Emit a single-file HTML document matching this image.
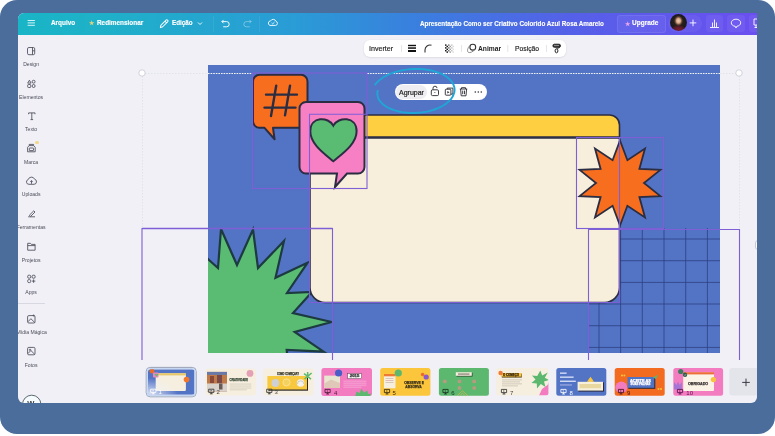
<!DOCTYPE html>
<html><head><meta charset="utf-8">
<style>
body *{ }
html,body{margin:0;padding:0;width:775px;height:436px;overflow:hidden;background:#fff;font-family:"Liberation Sans",sans-serif;}
.abs{position:absolute;}
#frame{position:absolute;left:0;top:0;width:775px;height:434px;background:#4b6d9c;border-radius:17px;}
#screen{will-change:transform;position:absolute;left:18px;top:13px;width:739px;height:390px;background:#f0f0f6;border-radius:6px 0 6px 6px;overflow:hidden;}
#header{position:absolute;left:0;top:0;width:739px;height:22.4px;background:linear-gradient(90deg,#19b5c6 0%,#1fb0c9 12%,#2a9bd6 38%,#3b7ddf 55%,#5560e8 75%,#6a4ff0 100%);}
.ht{position:absolute;color:#fff;font-weight:bold;font-size:7px;line-height:8px;white-space:nowrap;-webkit-text-stroke:0.12px #fff;}
.sb{position:absolute;left:0;width:29px;text-align:center;font-size:5.1px;line-height:6px;color:#4a4c58;white-space:nowrap;}
.tb{position:absolute;font-size:7.5px;line-height:9px;color:#222;white-space:nowrap;}
.thumb{position:absolute;top:369px;width:51px;height:27px;border-radius:3px;overflow:hidden;}
.tn{position:absolute;left:4px;bottom:1px;font-size:6px;line-height:7px;color:#333;}
</style></head>
<body>
<div id="frame"></div>
<div id="screen">
  <div id="header">
    <!-- hamburger -->
    <svg class="abs" style="left:9px;top:6px" width="9" height="9" viewBox="0 0 9 9"><path d="M0.6 1.5H7.9M0.6 3.9H7.9M0.6 6.3H7.9" stroke="#e6fbff" stroke-width="0.9" fill="none"/></svg>
    <div class="ht" style="left:33px;top:5.8px;font-size:6.4px;">Arquivo</div>
    <div class="ht" style="left:71px;top:6.2px;font-size:6px;color:#e6d37a;-webkit-text-stroke:0;">★</div>
    <div class="ht" style="left:79px;top:5.8px;font-size:6.4px;">Redimensionar</div>
    <svg class="abs" style="left:141px;top:4.5px" width="10" height="11" viewBox="0 0 10 11"><path d="M1.4 9.6L1.8 7.4L7 2.2A1.1 1.1 0 0 1 8.6 3.8L3.4 9Z M6 3.2L7.6 4.8" stroke="#f0faff" stroke-width="1.05" fill="none" stroke-linejoin="round"/></svg>
    <div class="ht" style="left:154px;top:5.8px;font-size:6.3px;">Edição</div>
    <svg class="abs" style="left:179px;top:8px" width="6" height="5" viewBox="0 0 6 5"><path d="M1 1.5L3 3.5L5 1.5" stroke="#fff" stroke-width="0.9" fill="none"/></svg>
    <div class="abs" style="left:195px;top:3px;width:1px;height:16px;background:rgba(255,255,255,0.07)"></div>
    <svg class="abs" style="left:203px;top:6px" width="10" height="9" viewBox="0 0 10 9"><path d="M2.3 1.2L0.9 2.6L2.3 4M1.2 2.6H5.6A2.6 2.6 0 0 1 5.6 7.8H2.6" stroke="#f0faff" stroke-width="1" fill="none" stroke-linecap="round" stroke-linejoin="round"/></svg>
    <svg class="abs" style="left:224px;top:6px" width="10" height="9" viewBox="0 0 10 9"><path d="M7.7 1.2L9.1 2.6L7.7 4M8.8 2.6H4.4A2.6 2.6 0 0 0 4.4 7.8H7.4" stroke="rgba(255,255,255,0.35)" stroke-width="1" fill="none" stroke-linecap="round" stroke-linejoin="round"/></svg>
    <div class="abs" style="left:241px;top:3px;width:1px;height:16px;background:rgba(255,255,255,0.07)"></div>
    <svg class="abs" style="left:249px;top:5px" width="12" height="10" viewBox="0 0 12 10"><path d="M3 7.4H8.6A2.1 2.1 0 0 0 8.9 3.3A2.9 2.9 0 0 0 3.6 2.9A2.3 2.3 0 0 0 3 7.4Z" stroke="#eaf8ff" stroke-width="1" fill="none"/><path d="M4.6 4.9L5.7 5.9L7.5 4.1" stroke="#eaf8ff" stroke-width="0.9" fill="none"/></svg>
    <div class="ht" style="left:402px;top:7px;font-size:6.3px;">Apresentação Como ser Criativo Colorido Azul Rosa Amarelo</div>
    <div class="abs" style="left:599px;top:2px;width:47px;height:16px;border-radius:3px;background:rgba(255,255,255,0.05);border:0.5px solid rgba(255,255,255,0.09)"></div>
    <div class="ht" style="left:606.5px;top:6.6px;font-size:6px;color:#e9a6ee;-webkit-text-stroke:0;">★</div>
    <div class="ht" style="left:614px;top:6px;font-size:6.5px;">Upgrade</div>
    <div class="abs" style="left:650px;top:2px;width:34px;height:17px;border-radius:9px;background:rgba(255,255,255,0.05)"></div>
    <div class="abs" style="left:651.5px;top:1.2px;width:17px;height:17px;border-radius:50%;background:radial-gradient(ellipse 26% 30% at 50% 40%,#f0d0b8 0%,#d8a888 45%,rgba(150,100,80,0.6) 75%,transparent 100%),radial-gradient(ellipse 45% 28% at 50% 92%,#7a2030 0%,#5a1a28 60%,transparent 100%),radial-gradient(circle at 50% 45%,#3a2a22 0%,#1e1c1a 55%,#15281e 100%);"></div>
    <svg class="abs" style="left:670.5px;top:5.6px" width="8" height="8" viewBox="0 0 8 8"><path d="M4 0.6V7.2M0.7 3.9H7.3" stroke="#fff" stroke-width="0.9"/></svg>
    <div class="abs" style="left:688px;top:2px;width:17px;height:17px;border-radius:3px;background:rgba(255,255,255,0.06)"></div>
    <svg class="abs" style="left:691px;top:5px" width="11" height="10" viewBox="0 0 11 10"><path d="M1 9.5H10M3.5 9V4.5M5.5 9V1.5M7.5 9V4.5" stroke="#fff" stroke-width="0.9" fill="none"/></svg>
    <div class="abs" style="left:709px;top:2px;width:18px;height:17px;border-radius:3px;background:rgba(255,255,255,0.06)"></div>
    <svg class="abs" style="left:712px;top:5px" width="12" height="11" viewBox="0 0 12 11"><path d="M6 1.2C3.2 1.2 1.3 2.8 1.3 4.8C1.3 6.6 2.9 8 5.2 8.3L6 10L6.8 8.3C9.1 8 10.7 6.6 10.7 4.8C10.7 2.8 8.8 1.2 6 1.2Z" stroke="#fff" stroke-width="0.9" fill="none"/></svg>
    <div class="abs" style="left:731px;top:2px;width:18px;height:17px;border-radius:3px;background:rgba(255,255,255,0.06)"></div>
    <svg class="abs" style="left:734px;top:5px" width="8" height="11" viewBox="0 0 8 11"><path d="M7 1H2V7H7M4 7V9.5M2.5 9.5H5.5" stroke="#fff" stroke-width="0.9" fill="none"/></svg>
  </div>
<div id="pg" style="position:absolute;left:-18px;top:-13px;width:775px;height:436px;">
<!-- canvas SVG -->
<svg class="abs" style="left:0;top:0" width="775" height="436" viewBox="0 0 775 436">
  <defs>
    <clipPath id="slideclip"><rect x="208" y="65" width="512" height="288"/></clipPath>
  </defs>
  <rect x="208" y="65" width="512" height="288" fill="#5373c5"/>
  <g clip-path="url(#slideclip)">
    <!-- grid -->
    <g stroke="#2c3d7e" stroke-width="0.75">
      <path d="M599 228V353M620.6 228V353M642.3 228V353M664 228V353M685.7 228V353M707.4 228V353"/>
      <path d="M588 239H720M588 260.7H720M588 282.4H720M588 304H720M588 325.7H720M588 347.4H720"/>
    </g>
    <!-- green starburst -->
    <path d="M198 250L209 260L218 268L221 229L237 265L253 229.6L258 268L284 241L275.5 277.8L307.6 262.7L287 293L312 292L293 313L331.7 322L294.7 332L323.6 351.7L286.7 350L290 380L180 380Z" fill="#5abb73" stroke="#1c3a40" stroke-width="2.2" stroke-linejoin="miter"/>
    <!-- card -->
    <path d="M310 138H619.5V287.5A15 15 0 0 1 604.5 302.5H325A15 15 0 0 1 310 287.5Z" fill="#f7eedc" stroke="#2b2d42" stroke-width="1.6"/>
    <path d="M310 137V125A10 10 0 0 1 320 115H609.5A10 10 0 0 1 619.5 125V137Z" fill="#ffcf42" stroke="#2b2d42" stroke-width="1.6"/>
    <!-- orange star -->
    <path id="ostar_dummy" d="" />
    <path id="ostar" d="M620.0 140.5L627.4 160.2L645.0 148.6L639.4 168.9L660.4 169.9L644.0 183.0L660.4 196.1L639.4 197.1L645.0 217.4L627.4 205.8L620.0 225.5L612.6 205.8L595.0 217.4L600.6 197.1L579.6 196.1L596.0 183.0L579.6 169.9L600.6 168.9L595.0 148.6L612.6 160.2Z" fill="#f86e1f" stroke="#2b2d42" stroke-width="1.8" stroke-linejoin="miter"/>
    <!-- orange bubble -->
    <path d="M259.5 74.8H301A6.5 6.5 0 0 1 307.5 81.3V121.3A6.5 6.5 0 0 1 301 127.8H273L274.6 139.3L264.5 127.8H259.5A6.5 6.5 0 0 1 253 121.3V81.3A6.5 6.5 0 0 1 259.5 74.8Z" fill="#f86e1f" stroke="#2b2d42" stroke-width="2" stroke-linejoin="round"/>
    <path d="M266 94.6H297M264.5 107.6H295.5M276.2 85.7L271 116M290 85.7L285 115.4" stroke="#2b2d42" stroke-width="2.4" fill="none" stroke-linecap="round"/>
    <!-- pink bubble -->
    <path d="M306 102H358A6.5 6.5 0 0 1 364.5 108.5V167A6.5 6.5 0 0 1 358 173.5H347L335 187L337 173.5H306A6.5 6.5 0 0 1 299.5 167V108.5A6.5 6.5 0 0 1 306 102Z" fill="#f77fc4" stroke="#2b2d42" stroke-width="2"/>
    <path d="M333.3 125.6C328.5 116.5 310.3 116 310.3 131.3C310.3 144 324 153.5 333.3 161.3C342.5 153.5 356.6 144 356.6 131.3C356.6 116 338.2 116.5 333.3 125.6Z" fill="#5abb73" stroke="#2b2d42" stroke-width="2"/>
  </g>
  <!-- selection boxes -->
  <g fill="none" stroke="#7f5fd6" stroke-width="1.1">
    <rect x="252.5" y="73" width="114.5" height="115.5"/>
    <path d="M309.5 188V302.5H619.5V137.5"/><path d="M309.5 188.5V114.3H367"/>
    <rect x="576.5" y="137.5" width="87" height="91"/>
    <path d="M588.5 360V229.5H739.5V360"/>
    <path d="M142 360V228.5H332.5V360"/><path d="M142 228.5H332.5" stroke-width="1.6"/>
  </g>
  <!-- dashed selection line -->
  <path d="M142 73.5H208M720 73.5H739M142.5 73V228M739.5 73V228" stroke="#e2e2ea" stroke-width="1" stroke-dasharray="1.5 1.5" fill="none"/>
  <path d="M208 73.5H252M367.5 73.5H720" stroke="#f4f6ff" stroke-width="1.1" stroke-dasharray="1.6 1" fill="none"/>
  <circle cx="142" cy="73" r="3.2" fill="#fff" stroke="#c8c8d4" stroke-width="0.8"/>
  <circle cx="739" cy="73" r="3.2" fill="#fff" stroke="#c8c8d4" stroke-width="0.8"/>
</svg>


<!-- filmstrip -->
<svg class="abs" style="left:0;top:0" width="775" height="436" viewBox="0 0 775 436" font-family="Liberation Sans" font-weight="bold">
  <defs>
    <radialGradient id="t1g" cx="0" cy="1" r="1"><stop offset="0" stop-color="#eef2fb" stop-opacity="0.9"/><stop offset="1" stop-color="#eef2fb" stop-opacity="0"/></radialGradient>
    <clipPath id="t1"><rect x="148" y="369.3" width="46.5" height="25.5" rx="2.5"/></clipPath>
    <clipPath id="t2"><rect x="205.4" y="368.4" width="50.4" height="27" rx="2.5"/></clipPath>
    <clipPath id="t4"><rect x="321.4" y="368" width="50.6" height="28" rx="2.5"/></clipPath>
    <clipPath id="t7"><rect x="496.4" y="368" width="52" height="27.6" rx="2.5"/></clipPath>
    <g id="pres"><path d="M0.4 0.4H5.6V3.6H0.4Z M3 3.6V5M1.6 5H4.4" fill="none" stroke-width="0.85"/><path d="M2.3 1.3L3.8 2L2.3 2.7Z" stroke="none" fill="currentColor"/></g>
  </defs>
  <!-- thumb 1 selected -->
  <rect x="146.2" y="367.4" width="50" height="29.4" rx="4" fill="none" stroke="#8e98ae" stroke-width="0.9"/>
  <rect x="147.3" y="368.5" width="47.8" height="27.2" rx="3" fill="none" stroke="#c4d8f4" stroke-width="1.2"/>
  <g clip-path="url(#t1)">
    <rect x="148" y="369.3" width="46.5" height="25.5" fill="#5373c5"/>
    <rect x="155.7" y="373.2" width="30.2" height="17.8" rx="1.2" fill="#f6efe0"/>
    <rect x="155.7" y="373.2" width="30.2" height="2.2" fill="#e9c86a"/>
    <circle cx="152" cy="371.2" r="2.4" fill="#ea6a2a"/>
    <rect x="153" y="372.5" width="5.5" height="5" rx="0.8" fill="#e889bd"/>
    <path d="M154.5 374.2A1.3 1.3 0 0 1 156.5 374.6A1.3 1.3 0 0 1 158.3 374.2L156.5 376.8Z" fill="#5cb86f"/>
    <circle cx="186.5" cy="379.6" r="2.8" fill="#f2772a"/>
    <rect x="148" y="378" width="30" height="17" fill="url(#t1g)"/>
  </g>
  <g stroke="#fff" color="#fff"><use href="#pres" x="150.3" y="388.8"/></g>
  <text x="158.6" y="394.3" font-size="6" fill="#fff" font-weight="normal">1</text>

  <!-- thumb 2 -->
  <rect x="205.4" y="368.4" width="50.4" height="27" rx="2.5" fill="#f6efdf"/>
  <g clip-path="url(#t2)">
  <rect x="207" y="371.9" width="20" height="19.8" fill="#c07a48"/>
  <rect x="207" y="371.9" width="20" height="3" fill="#6a7aa8"/>
  <rect x="210" y="376" width="4" height="7" fill="#8a4a3a"/><rect x="217" y="375" width="5" height="8" fill="#7a4a4a"/>
  <rect x="207" y="383.5" width="20" height="8.2" fill="#d8d2cc"/>
  <rect x="219" y="383.5" width="3.5" height="6" fill="#6a5a58"/>
  <text stroke="#3a4a3a" stroke-width="0.25" x="229.6" y="381" font-size="3" fill="#3a4a3a" textLength="18.3" lengthAdjust="spacingAndGlyphs">CRIATIVIDADE</text>
  <rect x="229.8" y="383.6" width="21.5" height="0.9" fill="#d4ccbe"/><rect x="229.8" y="385.6" width="21.5" height="0.9" fill="#d4ccbe"/><rect x="229.8" y="387.6" width="21.5" height="0.9" fill="#d4ccbe"/><rect x="229.8" y="389.4" width="17" height="0.9" fill="#d4ccbe"/>
  <circle cx="250" cy="373.4" r="3.4" fill="#e4a0b4"/>
  </g>
  <g stroke="#333" color="#333"><use href="#pres" x="208.3" y="388.8"/></g>
  <text x="216.6" y="394.3" font-size="6" fill="#444" font-weight="normal">2</text>

  <!-- thumb 3 -->
  <rect x="263.2" y="368.4" width="50.4" height="27" rx="2.5" fill="#f6efdf"/>
  <text stroke="#3a3a2a" stroke-width="0.25" x="277" y="374.6" font-size="2.8" fill="#3a3a2a" textLength="22" lengthAdjust="spacingAndGlyphs">COMO COMEÇAR?</text>
  <rect x="268.5" y="377.2" width="39.5" height="13.5" fill="#2e2a22"/>
  <rect x="267.4" y="376" width="39.6" height="13.5" fill="#f8c83e"/>
  <circle cx="275.4" cy="383" r="3.9" fill="#cfd0d4"/><circle cx="286.5" cy="382.4" r="3.6" fill="#f5d260" stroke="#fff3c0" stroke-width="0.5"/><circle cx="300.6" cy="383" r="3.8" fill="#f4f1ea"/><path d="M297.4 384A3.2 3.2 0 0 1 303.8 384" fill="none" stroke="#b0b0b0" stroke-width="0.6"/>
  <path d="M307.8 376.3L304 373.6M307.8 376.3L311.6 373M307.8 376.3L304.6 379M307.8 376.3L311 379.2M307.8 376.3L307.6 372" stroke="#5cb86f" stroke-width="1.5"/>
  <g stroke="#333" color="#333"><use href="#pres" x="266.3" y="388.8"/></g>
  <text x="274.6" y="394.3" font-size="6" fill="#444" font-weight="normal">3</text>

  <!-- thumb 4 -->
  <rect x="321.4" y="368" width="50.6" height="28" rx="2.5" fill="#f37cc0"/>
  <g clip-path="url(#t4)">
  <rect x="324.2" y="375.6" width="15.8" height="12.4" fill="#e8e6d0"/>
  <path d="M324.2 383.5L331 379.5L340 383V388H324.2Z" fill="#e0c8b8"/>
  <circle cx="338.6" cy="373" r="3.6" fill="#4a5ec8"/>
  <rect x="347.8" y="373.7" width="13.6" height="4.8" fill="#fff" stroke="#3a3a3a" stroke-width="0.4"/>
  <text stroke="#333" stroke-width="0.25" x="349.8" y="377.4" font-size="3.3" fill="#333" textLength="9.6" lengthAdjust="spacingAndGlyphs">2015</text>
  <rect x="343.4" y="380.7" width="23" height="0.9" fill="#f8a8d8"/><rect x="343.4" y="382.7" width="23" height="0.9" fill="#f8a8d8"/><rect x="343.4" y="384.7" width="23" height="0.9" fill="#f8a8d8"/><rect x="343.4" y="386.7" width="18" height="0.9" fill="#f8a8d8"/>
  <path d="M355 397L356.5 391.5L359.5 393L361.5 388.8L364 392.5L367.5 390.5L368 394L371 393.5L370 397Z" fill="#5cb86f"/>
  </g>
  <g stroke="#4a1a3a" color="#4a1a3a"><use href="#pres" x="324.6" y="389"/></g>
  <text x="334" y="394.5" font-size="6" fill="#4a1a3a" font-weight="normal">4</text>

  <!-- thumb 5 -->
  <rect x="380.2" y="368" width="50.2" height="27.8" rx="2.5" fill="#fbc53c"/>
  <rect x="384" y="374" width="11.5" height="14.3" fill="#f6efdf"/>
  <rect x="384" y="374" width="11.5" height="2.3" fill="#ef7a34"/>
  <rect x="385.5" y="378" width="8" height="0.7" fill="#c8b8a8"/><rect x="385.5" y="380" width="8" height="0.7" fill="#d8a8a8"/><rect x="385.5" y="382" width="8" height="0.7" fill="#c8b8a8"/>
  <circle cx="398.3" cy="373" r="3.6" fill="#5cb86f"/>
  <text stroke="#3a3018" stroke-width="0.25" x="404.2" y="383.6" font-size="3.4" fill="#3a3018" textLength="19.8" lengthAdjust="spacingAndGlyphs">OBSERVE E</text>
  <text stroke="#3a3018" stroke-width="0.25" x="405.3" y="388" font-size="3.4" fill="#3a3018" textLength="16.5" lengthAdjust="spacingAndGlyphs">ABSORVA</text>
  <circle cx="422.6" cy="374.5" r="1.8" fill="#ef6a2a"/><circle cx="426.2" cy="377" r="2.6" fill="#8a5ac8"/>
  <g stroke="#3a2a10" color="#3a2a10"><use href="#pres" x="384" y="389"/></g>
  <text x="392.5" y="394.5" font-size="6" fill="#3a2a10" font-weight="normal">5</text>

  <!-- thumb 6 -->
  <rect x="438.9" y="368" width="50" height="27.8" rx="2.5" fill="#5cb86f"/>
  <rect x="456.5" y="372.8" width="16" height="3.7" fill="#2a3a2a"/>
  <rect x="455.8" y="372.2" width="16" height="3.6" fill="#f6efdf"/>
  <rect x="458" y="373.6" width="11.5" height="0.9" fill="#5a5a4a"/>
  <g fill="#b89a80"><circle cx="444.8" cy="381.4" r="1.9"/><circle cx="459.5" cy="381.4" r="1.9"/><circle cx="474.2" cy="381.4" r="1.9"/><circle cx="459.5" cy="388" r="1.9"/><circle cx="474.2" cy="388" r="1.9"/></g>
  <path d="M457 395.8L462.5 390.8L468 395.8M459.7 395.8L462.5 393.3L465.3 395.8" fill="none" stroke="#d8b84a" stroke-width="0.7"/>
  <g stroke="#1a3020" color="#1a3020"><use href="#pres" x="442.5" y="389"/></g>
  <text x="451.2" y="394.5" font-size="6" fill="#1a3020" font-weight="normal">6</text>

  <!-- thumb 7 -->
  <rect x="496.4" y="368" width="52" height="27.6" rx="2.5" fill="#f6efdf"/>
  <g clip-path="url(#t7)">
  <rect x="501.8" y="373.6" width="20" height="4" fill="#5a4a20"/>
  <rect x="501.3" y="373" width="20" height="3.6" fill="#fbc63c"/>
  <circle cx="500.6" cy="373" r="2.2" fill="#ee7a3a"/>
  <text stroke="#3a2a10" stroke-width="0.25" x="503" y="376" font-size="2.6" fill="#3a2a10" textLength="16" lengthAdjust="spacingAndGlyphs">O COMEÇO</text>
  <rect x="502" y="379.5" width="20" height="0.8" fill="#c8c0b0"/><rect x="502" y="381.5" width="18" height="0.8" fill="#c8c0b0"/><rect x="502" y="383.5" width="20" height="0.8" fill="#c8c0b0"/><rect x="502" y="385.5" width="16" height="0.8" fill="#c8c0b0"/>
  <path d="M549 382L547.5 385L542 389L539 395.6H549Z" fill="#f37cc0"/>
  <path d="M540.3 370.5L542.2 375.5L547.8 372.5L544.8 377.8L549 380L544 381.5L545.5 387L540.8 384L537 388.5L536.8 383.5L531.5 383L535.5 379.5L532 375.5L537.2 376Z" fill="#5cb86f"/>
  </g>
  <g stroke="#333" color="#333"><use href="#pres" x="501" y="389"/></g>
  <text x="510" y="394.5" font-size="6" fill="#444" font-weight="normal">7</text>

  <!-- thumb 8 -->
  <rect x="556.3" y="368" width="50" height="27.8" rx="2.5" fill="#5373c5"/>
  <g fill="#dfe6fa"><rect x="560" y="372.5" width="6.6" height="1.3"/><rect x="560" y="376.5" width="13.6" height="1.3"/><rect x="560" y="380.6" width="15.8" height="1.3"/></g>
  <rect x="560" y="384.3" width="12" height="1.3" fill="#98aae0"/>
  <path d="M587 381.8L590.5 376.8L594 381.8Z" fill="#f8c53a"/><circle cx="590.5" cy="380.5" r="2" fill="#f8c53a"/>
  <rect x="578.4" y="382.4" width="25.6" height="9.2" fill="#2a2a3a"/>
  <rect x="577.6" y="381.8" width="25.4" height="8.8" fill="#f6f0dc"/>
  <rect x="579.5" y="384" width="21.5" height="4.2" fill="#e8d8a0"/>
  <g stroke="#fff" color="#fff"><use href="#pres" x="560.5" y="389"/></g>
  <text x="569.5" y="394.5" font-size="6" fill="#fff" font-weight="normal">8</text>

  <!-- thumb 9 -->
  <rect x="614.7" y="368" width="50" height="27.8" rx="2.5" fill="#f26b21"/>
  <circle cx="621.3" cy="387.3" r="5.9" fill="#f37cc0"/>
  <rect x="628.3" y="377.8" width="27" height="11" fill="#2a2a3a"/>
  <rect x="627.5" y="377" width="26.8" height="10.8" fill="#5373c5"/>
  <text stroke="#fff" stroke-width="0.25" x="630" y="381.6" font-size="2.8" fill="#fff" textLength="21" lengthAdjust="spacingAndGlyphs">ACEITE AS</text>
  <text stroke="#fff" stroke-width="0.25" x="630.5" y="385.4" font-size="2.8" fill="#fff" textLength="20" lengthAdjust="spacingAndGlyphs">SUAS FALHAS</text>
  <path d="M653 377.5L658 374.5L656 379Z" fill="#5cb86f"/>
  <g fill="#f8c53a"><circle cx="622" cy="375.6" r="1"/><circle cx="624.4" cy="375.6" r="1"/><circle cx="658.5" cy="389" r="1"/><circle cx="661" cy="389" r="1"/></g>
  <g stroke="#4a1010" color="#4a1010"><use href="#pres" x="618" y="389"/></g>
  <text x="627" y="394.5" font-size="6" fill="#4a1010" font-weight="normal">9</text>

  <!-- thumb 10 -->
  <rect x="673.3" y="368" width="49.8" height="27.8" rx="2.5" fill="#f37cc0"/>
  <rect x="683.2" y="372.2" width="30.8" height="18.8" rx="1" fill="#fbf3e6"/>
  <rect x="683.2" y="372.2" width="30.8" height="2.2" fill="#ee6e3a"/>
  <text stroke="#3a3434" stroke-width="0.25" x="688" y="384.6" font-size="3.6" fill="#3a3434" textLength="20.2" lengthAdjust="spacingAndGlyphs">OBRIGADO</text>
  <circle cx="713.4" cy="379.6" r="2.6" fill="#f8c53a"/>
  <circle cx="680.7" cy="371.5" r="2.6" fill="#3e7a60"/>
  <circle cx="685" cy="374.8" r="2.2" fill="#2e5a48"/><path d="M684 374.4L685 375.6L686.2 374" stroke="#cfe8d8" stroke-width="0.5" fill="none"/>
  <path d="M674 389.5V382L676.5 385L678 381.4L679.6 385L681.8 382V389.5Z" fill="#a874d4"/>
  <g stroke="#5a1050" color="#5a1050"><use href="#pres" x="677" y="389"/></g>
  <text x="686.3" y="394.5" font-size="6" fill="#5a1050" font-weight="normal">10</text>

  <!-- plus button -->
  <rect x="729.3" y="368" width="35" height="27.6" rx="3" fill="#e4e5eb"/>
  <path d="M742.2 382.4H749.8M746 378.6V386.2" stroke="#3a3a44" stroke-width="1"/>
</svg>
<div class="abs" style="left:754.6px;top:240px;width:6px;height:8px;border-radius:3px;background:#fff;border:0.5px solid #c4c6d0;"></div>
<!-- toolbar -->
<div class="abs" style="left:364px;top:40px;width:202px;height:17px;background:#fff;border-radius:6px;box-shadow:0 0.5px 2px rgba(0,0,0,0.12);"></div>
<div class="tb" style="left:369px;top:44.7px;font-size:7.1px;-webkit-text-stroke:0.15px #222;">Inverter</div>
<svg class="abs" style="left:364px;top:40px" width="202" height="17" viewBox="364 40 202 17">
  <g fill="#dadae2"><rect x="401" y="45" width="0.7" height="7"/><rect x="461" y="45" width="0.7" height="7"/><rect x="507.5" y="45" width="0.7" height="7"/><rect x="546" y="45" width="0.7" height="7"/></g>
  <g fill="#111"><rect x="408" y="44.8" width="8" height="1.4"/><rect x="408" y="47.3" width="8" height="1.5"/><rect x="408" y="50" width="8" height="2"/></g>
  <path d="M425 52.5V50A5 5 0 0 1 431.5 45.2" stroke="#333" stroke-width="1.1" fill="none"/>
  <g fill="#111"><rect x="445.0" y="44.4" width="1.5" height="1.4" fill-opacity="1.00"/><rect x="448.0" y="44.4" width="1.5" height="1.4" fill-opacity="0.60"/><rect x="451.0" y="44.4" width="1.5" height="1.4" fill-opacity="0.25"/><rect x="446.5" y="45.8" width="1.5" height="1.4" fill-opacity="1.00"/><rect x="449.5" y="45.8" width="1.5" height="1.4" fill-opacity="0.40"/><rect x="452.5" y="45.8" width="1.5" height="1.4" fill-opacity="0.15"/><rect x="445.0" y="47.2" width="1.5" height="1.4" fill-opacity="1.00"/><rect x="448.0" y="47.2" width="1.5" height="1.4" fill-opacity="0.60"/><rect x="451.0" y="47.2" width="1.5" height="1.4" fill-opacity="0.25"/><rect x="446.5" y="48.6" width="1.5" height="1.4" fill-opacity="1.00"/><rect x="449.5" y="48.6" width="1.5" height="1.4" fill-opacity="0.40"/><rect x="452.5" y="48.6" width="1.5" height="1.4" fill-opacity="0.15"/><rect x="445.0" y="50.0" width="1.5" height="1.4" fill-opacity="1.00"/><rect x="448.0" y="50.0" width="1.5" height="1.4" fill-opacity="0.60"/><rect x="451.0" y="50.0" width="1.5" height="1.4" fill-opacity="0.25"/><rect x="446.5" y="51.4" width="1.5" height="1.4" fill-opacity="1.00"/><rect x="449.5" y="51.4" width="1.5" height="1.4" fill-opacity="0.40"/><rect x="452.5" y="51.4" width="1.5" height="1.4" fill-opacity="0.15"/></g>
  <g stroke="#333" stroke-width="0.9" fill="none">
    <circle cx="472.8" cy="47.2" r="2.9" stroke-width="1.1"/><path d="M470.2 45.3C467.5 47.5 466.8 51.5 468.3 52.3C469.8 53.2 473 51.8 474.8 49.6" stroke="#777" stroke-width="0.85"/>
  </g>
  <g stroke="#222" stroke-width="1" fill="none">
    <rect x="552.9" y="44.2" width="7.6" height="3.1" rx="1.5" fill="#333" stroke="#222" stroke-width="0.9"/><path d="M554 45.6H559" stroke="#ddd" stroke-width="0.6"/><path d="M559.8 47.2C559.5 48.3 557 48 556.6 49" stroke-width="0.8"/><ellipse cx="556.5" cy="50.8" rx="1.4" ry="2" stroke-width="1"/></g>
</svg>
<div class="tb" style="left:478px;top:44px;font-weight:bold;font-size:6.7px;">Animar</div>
<div class="tb" style="left:515px;top:44px;font-size:6.75px;-webkit-text-stroke:0.15px #222;">Posição</div>

<!-- agrupar pill -->
<div class="abs" style="left:395px;top:84px;width:92px;height:16px;background:#fff;border-radius:8px;"></div>
<div class="abs" style="left:396px;top:85px;width:31px;height:14px;background:#eeeef2;border-radius:7px;"></div>
<div class="tb" style="left:399px;top:87.6px;font-size:7px;-webkit-text-stroke:0.2px #222;">Agrupar</div>
<svg class="abs" style="left:428px;top:84px" width="59" height="16" viewBox="428 84 59 16" fill="none" stroke="#2a2a33" stroke-width="0.9">
  <rect x="431.3" y="89.8" width="7.2" height="5.8" rx="1.2"/><path d="M433 89.8V88.3A2 2 0 0 1 437 88.1"/><circle cx="434.9" cy="92.6" r="0.5" fill="#2a2a33" stroke="none"/>
  <rect x="445.3" y="89.2" width="5.6" height="6" rx="0.8"/><path d="M447.3 89.2V88.1H452.9V94.1H450.9"/><path d="M447.3 91L449.5 92.2L447.3 93.4Z" fill="#2a2a33" stroke="none"/>
  <path d="M459.8 89H467.2M461.5 89V87.7H465.5V89M460.6 89L461.2 95.8H466L466.6 89M462.7 90.6V94.2M464.5 90.6V94.2"/>
  <circle cx="475.3" cy="92" r="0.8" fill="#2a2a33" stroke="none"/><circle cx="478.3" cy="92" r="0.8" fill="#2a2a33" stroke="none"/><circle cx="481.3" cy="92" r="0.8" fill="#2a2a33" stroke="none"/>
</svg>

<svg class="abs" style="left:0;top:0" width="775" height="436" viewBox="0 0 775 436"><path d="M375.1 84.6L376.6 82.8L378.4 81.1L380.4 79.4L382.6 77.8L385.1 76.3L387.7 75.0L390.5 73.7L393.5 72.6L396.6 71.6L399.9 70.8L403.2 70.1L406.6 69.6L410.0 69.2L413.5 69.0L416.9 68.9L420.3 69.0L423.7 69.3L427.0 69.7L430.2 70.2L433.3 71.0L436.2 71.8L439.0 72.8L441.6 73.9L444.0 75.2L446.2 76.5L448.1 78.0L449.8 79.5L451.3 81.1L452.5 82.8L453.4 84.6L454.1 86.4L454.5 88.2L454.6 90.0L454.4 91.9L453.9 93.7L453.2 95.5L452.2 97.3L451.0 99.1L449.4 100.7L447.7 102.3L445.7 103.9L443.6 105.3L441.2 106.7L438.6 107.9L435.9 109.0L433.1 110.0L430.1 110.8L427.0 111.6L423.9 112.1L420.7 112.6L417.5 112.8L414.3 113.0L411.0 113.0L407.9 112.8L404.7 112.5L401.7 112.1L398.8 111.5L395.9 110.7L393.3 109.9L390.7 108.9L388.4 107.8L386.3 106.6L384.3 105.3L382.6 103.9L381.1 102.4L379.8 100.9L378.8 99.3L378.1 97.6L377.6 95.9L377.4 94.2L377.4 92.5L377.7 90.8" fill="none" stroke="#1fa6d6" stroke-width="1.9" stroke-linecap="round" stroke-linejoin="round"/></svg>
<!-- sidebar -->
<svg class="abs" style="left:0;top:0" width="60" height="436" viewBox="0 0 60 436" fill="none" stroke="#4a4c58" stroke-width="0.85">
  <!-- design -->
  <rect x="27.5" y="47.5" width="7.2" height="7.2" rx="1.4"/><path d="M32.5 47.5V54.7M32.5 50.8H34.7"/>
  <!-- elementos -->
  <path d="M29.4 80.2L27.7 83.1H31.1Z"/><circle cx="33.6" cy="81.7" r="1.45"/><rect x="27.7" y="84.5" width="3" height="3" rx="0.7"/><rect x="32.1" y="84.5" width="3" height="3" rx="1.5"/>
  <!-- texto -->
  <path d="M28.6 114.2V112.9H35V114.2M31.8 112.9V119.6M30.5 119.6H33.1"/>
  <!-- marca -->
  <path d="M27.6 151.8V147.3L29.2 145.6H33.6L35.2 147.3V151.8Z"/><path d="M29.2 145.6V144.4H33.6V145.6"/><rect x="29.3" y="148" width="4.2" height="2.6" rx="0.4"/>
  <!-- uploads -->
  <path d="M29 184.3A2.4 2.4 0 0 1 28.2 179.6A3.4 3.4 0 0 1 34.6 179.2A2.6 2.6 0 0 1 34.1 184.3Z"/><path d="M31.5 183.8V180.6M30.3 181.8L31.5 180.6L32.7 181.8"/>
  <!-- ferramentas -->
  <path d="M28.2 216.8H35M29.4 215.2L33.8 210.8L35 212L30.6 216.4Z"/>
  <!-- projetos -->
  <path d="M27.7 243.3H30.4L31.4 244.4H35.1V250.2H27.7Z M27.7 245.6H35.1"/>
  <!-- apps -->
  <rect x="27.7" y="275.2" width="3" height="3" rx="1.1"/><rect x="32.1" y="275.2" width="3" height="3" rx="1.1"/><rect x="27.7" y="279.6" width="3" height="3" rx="1.1"/><path d="M33.6 279.4V282.8M31.9 281.1H35.3"/>
  <!-- midia -->
  <rect x="27.6" y="315.6" width="7.4" height="7.4" rx="1.2"/><path d="M27.9 321.8L30.9 318.7L34.8 322.6"/><path d="M33.6 314.4V316.6M32.5 315.5H34.7" stroke-width="0.6"/>
  <!-- fotos -->
  <rect x="27.6" y="347.4" width="7.4" height="7.4" rx="1.2"/><path d="M27.9 353.6L30.9 350.5L34.8 354.4"/><circle cx="30" cy="349.8" r="0.65"/>
  <!-- avatar -->
  <circle cx="31.7" cy="404.4" r="9.2" stroke="#4a5a60" stroke-width="0.9" fill="#f6fbfd"/><text x="27.2" y="406.4" font-family="Liberation Sans" font-weight="bold" font-size="7.5" fill="#3a4448" stroke="none">W</text>
</svg>
<div class="abs" style="left:35.2px;top:140.6px;width:3.8px;height:3.8px;border-radius:50%;background:#f2d88c;"></div>
<div class="abs" style="left:18px;top:303px;width:27px;height:0.7px;background:#d8d8e2;"></div>
<div class="sb" style="left:16.6px;top:60.5px;">Design</div>
<div class="sb" style="left:16.6px;top:93.5px;">Elementos</div>
<div class="sb" style="left:16.6px;top:126px;">Texto</div>
<div class="sb" style="left:16.6px;top:158.5px;">Marca</div>
<div class="sb" style="left:16.6px;top:191px;">Uploads</div>
<div class="sb" style="left:16.6px;top:224px;">Ferramentas</div>
<div class="sb" style="left:16.6px;top:256.5px;">Projetos</div>
<div class="sb" style="left:16.6px;top:289px;">Apps</div>
<div class="sb" style="left:16.6px;top:329px;">Mídia Mágica</div>
<div class="sb" style="left:16.6px;top:361.5px;">Fotos</div>

</div>
</div>

</body></html>
